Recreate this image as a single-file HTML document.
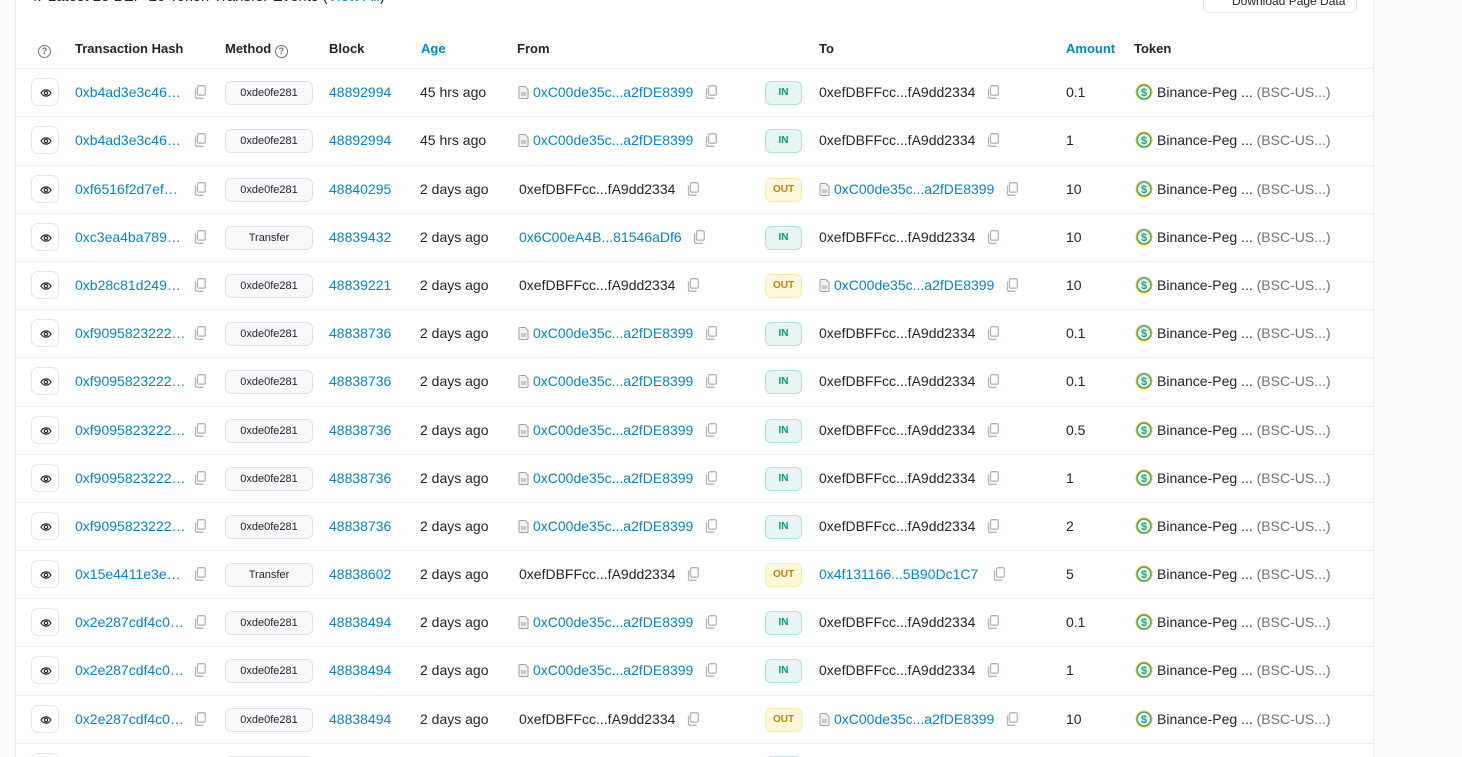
<!DOCTYPE html>
<html><head><meta charset="utf-8"><style>
*{margin:0;padding:0;box-sizing:border-box}
html{width:1462px;height:757px;overflow:hidden}
body{width:1462px;height:757px;overflow:hidden;background:#fbfbfc;font-family:"Liberation Sans",sans-serif;font-size:14px;color:#212529;position:relative}
.card{position:absolute;left:15px;top:-20px;width:1359px;height:777px;background:#fff;border:1px solid #e9ecef;border-bottom:none}
.abs{position:absolute;white-space:nowrap}
.top{left:31px;top:-13px;font-size:15px;color:#212529}
.top a{color:#0784c3}
.dl{left:1203px;top:-10px;width:154px;height:23px;border:1px solid #e3e6ea;border-radius:7px;background:#fff;font-size:12px;padding:3px 0 0 28px}
.hd{top:41px;font-size:13px;font-weight:bold;color:#212529}
.hd.b{color:#0784c3}
.q{display:inline-block;width:13px;height:13px;border:1.3px solid #6c757d;border-radius:50%;font-size:9px;line-height:10px;text-align:center;color:#6c757d;font-weight:bold;vertical-align:-1px}
.line{left:15px;width:1358px;height:1px;background:#eef0f2}
.row{position:absolute;left:0;width:1462px;height:48px}
.row>*{position:absolute;white-space:nowrap}
.eye{left:31px;top:10px;width:28px;height:28px;border:1px solid #e3e6ea;border-radius:7px}
.eye svg{position:absolute;left:8px;top:9px}
.hash{left:75px;top:16px;color:#0784c3}
.cp{width:12px;height:14px}
.m{left:225px;top:13px;width:88px;height:24px;border:1px solid #dee2e6;border-radius:6px;background:#f8f9fa;font-size:11px;text-align:center;line-height:22px}
.blk{left:329px;top:16px;color:#0784c3}
.age{left:420px;top:16px}
.fr{left:518px;top:16px}
.tt{left:819px;top:16px}
.lk{color:#0784c3}
.doc{display:inline-block;vertical-align:-2px;margin-right:4px}
.bd{left:765px;top:13px;width:37px;height:24px;border-radius:6px;font-size:10px;font-weight:bold;text-align:center;line-height:22px}
.in{background:#e7f6f3;border:1px solid #b3e2d8;color:#02977e}
.out{background:#fff7dd;border:1px solid #fde8a4;color:#b88700}
.amt{left:1066px;top:16px}
.tok{left:1135px;top:15px}
.tok .g{color:#6c757d}
.coin{display:inline-block;width:18px;height:18px;vertical-align:-4px;margin-right:4px}
</style></head><body>
<div class="card"></div>
<div class="abs top">⇅ Latest 25 BEP-20 Token Transfer Events (<a>View All</a>)</div>
<div class="abs dl">Download Page Data</div>
<div class="abs hd" style="left:38px"><span class="q">?</span></div>
<div class="abs hd" style="left:75px">Transaction Hash</div>
<div class="abs hd" style="left:225px">Method <span class="q">?</span></div>
<div class="abs hd" style="left:329px">Block</div>
<div class="abs hd b" style="left:421px">Age</div>
<div class="abs hd" style="left:517px">From</div>
<div class="abs hd" style="left:819px">To</div>
<div class="abs hd b" style="left:1066px">Amount</div>
<div class="abs hd" style="left:1134px">Token</div>
<div class="abs line" style="top:68px"></div>

<svg width="0" height="0" style="position:absolute">
<defs>
<symbol id="cp" viewBox="0 0 12 14"><rect x="3.5" y="0.7" width="7.8" height="9.5" rx="1.5" fill="none" stroke="#adb5bd" stroke-width="1.3"/><path d="M1.5 3.5v8.3a1.5 1.5 0 0 0 1.5 1.5h6.5" fill="none" stroke="#adb5bd" stroke-width="1.3"/></symbol>
<symbol id="doc" viewBox="0 0 11 13"><path d="M1 1.5a1 1 0 0 1 1-1h5l3 3v8a1 1 0 0 1-1 1H2a1 1 0 0 1-1-1z" fill="#f1f3f5" stroke="#9aa1a8" stroke-width="1"/><path d="M3 7h5M3 9h5" stroke="#9aa1a8" stroke-width="1"/></symbol>
<symbol id="eye" viewBox="0 0 14 12"><path d="M1 6c3-5 9-5 12 0c-3 5-9 5-12 0z" fill="none" stroke="#212529" stroke-width="1.4"/><circle cx="7" cy="6" r="2" fill="none" stroke="#212529" stroke-width="1.4"/></symbol>
<symbol id="coin" viewBox="0 0 18 18"><circle cx="9" cy="9" r="8.5" fill="#f0c52a"/><circle cx="9" cy="9" r="6.8" fill="#e8f7ef" stroke="#26a17b" stroke-width="1.2"/><text x="9" y="13" font-size="11" font-weight="bold" text-anchor="middle" fill="#26a17b" font-family="Liberation Sans">$</text></symbol>
</defs></svg>

<div class="row" style="top:68px"><div class="eye"><svg width="12" height="10"><use href="#eye"/></svg></div><span class="hash">0xb4ad3e3c46…</span><svg class="cp" style="left:194px;top:17px"><use href="#cp"/></svg><div class="m">0xde0fe281</div><span class="blk">48892994</span><span class="age">45 hrs ago</span><span class="fr"><svg class="doc" width="11" height="13"><use href="#doc"/></svg><span class="lk">0xC00de35c...a2fDE8399</span></span><svg class="cp" style="left:705px;top:17px"><use href="#cp"/></svg><div class="bd in">IN</div><span class="tt">0xefDBFFcc...fA9dd2334</span><svg class="cp" style="left:987px;top:17px"><use href="#cp"/></svg><span class="amt">0.1</span><span class="tok"><svg class="coin"><use href="#coin"/></svg>Binance-Peg ... <span class="g">(BSC-US...)</span></span></div>
<div class="abs line" style="top:116px"></div>
<div class="row" style="top:116px"><div class="eye"><svg width="12" height="10"><use href="#eye"/></svg></div><span class="hash">0xb4ad3e3c46…</span><svg class="cp" style="left:194px;top:17px"><use href="#cp"/></svg><div class="m">0xde0fe281</div><span class="blk">48892994</span><span class="age">45 hrs ago</span><span class="fr"><svg class="doc" width="11" height="13"><use href="#doc"/></svg><span class="lk">0xC00de35c...a2fDE8399</span></span><svg class="cp" style="left:705px;top:17px"><use href="#cp"/></svg><div class="bd in">IN</div><span class="tt">0xefDBFFcc...fA9dd2334</span><svg class="cp" style="left:987px;top:17px"><use href="#cp"/></svg><span class="amt">1</span><span class="tok"><svg class="coin"><use href="#coin"/></svg>Binance-Peg ... <span class="g">(BSC-US...)</span></span></div>
<div class="abs line" style="top:165px"></div>
<div class="row" style="top:165px"><div class="eye"><svg width="12" height="10"><use href="#eye"/></svg></div><span class="hash">0xf6516f2d7ef…</span><svg class="cp" style="left:194px;top:17px"><use href="#cp"/></svg><div class="m">0xde0fe281</div><span class="blk">48840295</span><span class="age">2 days ago</span><span class="fr" style="left:519px">0xefDBFFcc...fA9dd2334</span><svg class="cp" style="left:687px;top:17px"><use href="#cp"/></svg><div class="bd out">OUT</div><span class="tt"><svg class="doc" width="11" height="13"><use href="#doc"/></svg><span class="lk">0xC00de35c...a2fDE8399</span></span><svg class="cp" style="left:1006px;top:17px"><use href="#cp"/></svg><span class="amt">10</span><span class="tok"><svg class="coin"><use href="#coin"/></svg>Binance-Peg ... <span class="g">(BSC-US...)</span></span></div>
<div class="abs line" style="top:213px"></div>
<div class="row" style="top:213px"><div class="eye"><svg width="12" height="10"><use href="#eye"/></svg></div><span class="hash">0xc3ea4ba789…</span><svg class="cp" style="left:194px;top:17px"><use href="#cp"/></svg><div class="m">Transfer</div><span class="blk">48839432</span><span class="age">2 days ago</span><span class="fr lk" style="left:519px">0x6C00eA4B...81546aDf6</span><svg class="cp" style="left:693px;top:17px"><use href="#cp"/></svg><div class="bd in">IN</div><span class="tt">0xefDBFFcc...fA9dd2334</span><svg class="cp" style="left:987px;top:17px"><use href="#cp"/></svg><span class="amt">10</span><span class="tok"><svg class="coin"><use href="#coin"/></svg>Binance-Peg ... <span class="g">(BSC-US...)</span></span></div>
<div class="abs line" style="top:261px"></div>
<div class="row" style="top:261px"><div class="eye"><svg width="12" height="10"><use href="#eye"/></svg></div><span class="hash">0xb28c81d249…</span><svg class="cp" style="left:194px;top:17px"><use href="#cp"/></svg><div class="m">0xde0fe281</div><span class="blk">48839221</span><span class="age">2 days ago</span><span class="fr" style="left:519px">0xefDBFFcc...fA9dd2334</span><svg class="cp" style="left:687px;top:17px"><use href="#cp"/></svg><div class="bd out">OUT</div><span class="tt"><svg class="doc" width="11" height="13"><use href="#doc"/></svg><span class="lk">0xC00de35c...a2fDE8399</span></span><svg class="cp" style="left:1006px;top:17px"><use href="#cp"/></svg><span class="amt">10</span><span class="tok"><svg class="coin"><use href="#coin"/></svg>Binance-Peg ... <span class="g">(BSC-US...)</span></span></div>
<div class="abs line" style="top:309px"></div>
<div class="row" style="top:309px"><div class="eye"><svg width="12" height="10"><use href="#eye"/></svg></div><span class="hash">0xf9095823222…</span><svg class="cp" style="left:194px;top:17px"><use href="#cp"/></svg><div class="m">0xde0fe281</div><span class="blk">48838736</span><span class="age">2 days ago</span><span class="fr"><svg class="doc" width="11" height="13"><use href="#doc"/></svg><span class="lk">0xC00de35c...a2fDE8399</span></span><svg class="cp" style="left:705px;top:17px"><use href="#cp"/></svg><div class="bd in">IN</div><span class="tt">0xefDBFFcc...fA9dd2334</span><svg class="cp" style="left:987px;top:17px"><use href="#cp"/></svg><span class="amt">0.1</span><span class="tok"><svg class="coin"><use href="#coin"/></svg>Binance-Peg ... <span class="g">(BSC-US...)</span></span></div>
<div class="abs line" style="top:357px"></div>
<div class="row" style="top:357px"><div class="eye"><svg width="12" height="10"><use href="#eye"/></svg></div><span class="hash">0xf9095823222…</span><svg class="cp" style="left:194px;top:17px"><use href="#cp"/></svg><div class="m">0xde0fe281</div><span class="blk">48838736</span><span class="age">2 days ago</span><span class="fr"><svg class="doc" width="11" height="13"><use href="#doc"/></svg><span class="lk">0xC00de35c...a2fDE8399</span></span><svg class="cp" style="left:705px;top:17px"><use href="#cp"/></svg><div class="bd in">IN</div><span class="tt">0xefDBFFcc...fA9dd2334</span><svg class="cp" style="left:987px;top:17px"><use href="#cp"/></svg><span class="amt">0.1</span><span class="tok"><svg class="coin"><use href="#coin"/></svg>Binance-Peg ... <span class="g">(BSC-US...)</span></span></div>
<div class="abs line" style="top:406px"></div>
<div class="row" style="top:406px"><div class="eye"><svg width="12" height="10"><use href="#eye"/></svg></div><span class="hash">0xf9095823222…</span><svg class="cp" style="left:194px;top:17px"><use href="#cp"/></svg><div class="m">0xde0fe281</div><span class="blk">48838736</span><span class="age">2 days ago</span><span class="fr"><svg class="doc" width="11" height="13"><use href="#doc"/></svg><span class="lk">0xC00de35c...a2fDE8399</span></span><svg class="cp" style="left:705px;top:17px"><use href="#cp"/></svg><div class="bd in">IN</div><span class="tt">0xefDBFFcc...fA9dd2334</span><svg class="cp" style="left:987px;top:17px"><use href="#cp"/></svg><span class="amt">0.5</span><span class="tok"><svg class="coin"><use href="#coin"/></svg>Binance-Peg ... <span class="g">(BSC-US...)</span></span></div>
<div class="abs line" style="top:454px"></div>
<div class="row" style="top:454px"><div class="eye"><svg width="12" height="10"><use href="#eye"/></svg></div><span class="hash">0xf9095823222…</span><svg class="cp" style="left:194px;top:17px"><use href="#cp"/></svg><div class="m">0xde0fe281</div><span class="blk">48838736</span><span class="age">2 days ago</span><span class="fr"><svg class="doc" width="11" height="13"><use href="#doc"/></svg><span class="lk">0xC00de35c...a2fDE8399</span></span><svg class="cp" style="left:705px;top:17px"><use href="#cp"/></svg><div class="bd in">IN</div><span class="tt">0xefDBFFcc...fA9dd2334</span><svg class="cp" style="left:987px;top:17px"><use href="#cp"/></svg><span class="amt">1</span><span class="tok"><svg class="coin"><use href="#coin"/></svg>Binance-Peg ... <span class="g">(BSC-US...)</span></span></div>
<div class="abs line" style="top:502px"></div>
<div class="row" style="top:502px"><div class="eye"><svg width="12" height="10"><use href="#eye"/></svg></div><span class="hash">0xf9095823222…</span><svg class="cp" style="left:194px;top:17px"><use href="#cp"/></svg><div class="m">0xde0fe281</div><span class="blk">48838736</span><span class="age">2 days ago</span><span class="fr"><svg class="doc" width="11" height="13"><use href="#doc"/></svg><span class="lk">0xC00de35c...a2fDE8399</span></span><svg class="cp" style="left:705px;top:17px"><use href="#cp"/></svg><div class="bd in">IN</div><span class="tt">0xefDBFFcc...fA9dd2334</span><svg class="cp" style="left:987px;top:17px"><use href="#cp"/></svg><span class="amt">2</span><span class="tok"><svg class="coin"><use href="#coin"/></svg>Binance-Peg ... <span class="g">(BSC-US...)</span></span></div>
<div class="abs line" style="top:550px"></div>
<div class="row" style="top:550px"><div class="eye"><svg width="12" height="10"><use href="#eye"/></svg></div><span class="hash">0x15e4411e3e…</span><svg class="cp" style="left:194px;top:17px"><use href="#cp"/></svg><div class="m">Transfer</div><span class="blk">48838602</span><span class="age">2 days ago</span><span class="fr" style="left:519px">0xefDBFFcc...fA9dd2334</span><svg class="cp" style="left:687px;top:17px"><use href="#cp"/></svg><div class="bd out">OUT</div><span class="tt lk">0x4f131166...5B90Dc1C7</span><svg class="cp" style="left:993px;top:17px"><use href="#cp"/></svg><span class="amt">5</span><span class="tok"><svg class="coin"><use href="#coin"/></svg>Binance-Peg ... <span class="g">(BSC-US...)</span></span></div>
<div class="abs line" style="top:598px"></div>
<div class="row" style="top:598px"><div class="eye"><svg width="12" height="10"><use href="#eye"/></svg></div><span class="hash">0x2e287cdf4c0…</span><svg class="cp" style="left:194px;top:17px"><use href="#cp"/></svg><div class="m">0xde0fe281</div><span class="blk">48838494</span><span class="age">2 days ago</span><span class="fr"><svg class="doc" width="11" height="13"><use href="#doc"/></svg><span class="lk">0xC00de35c...a2fDE8399</span></span><svg class="cp" style="left:705px;top:17px"><use href="#cp"/></svg><div class="bd in">IN</div><span class="tt">0xefDBFFcc...fA9dd2334</span><svg class="cp" style="left:987px;top:17px"><use href="#cp"/></svg><span class="amt">0.1</span><span class="tok"><svg class="coin"><use href="#coin"/></svg>Binance-Peg ... <span class="g">(BSC-US...)</span></span></div>
<div class="abs line" style="top:646px"></div>
<div class="row" style="top:646px"><div class="eye"><svg width="12" height="10"><use href="#eye"/></svg></div><span class="hash">0x2e287cdf4c0…</span><svg class="cp" style="left:194px;top:17px"><use href="#cp"/></svg><div class="m">0xde0fe281</div><span class="blk">48838494</span><span class="age">2 days ago</span><span class="fr"><svg class="doc" width="11" height="13"><use href="#doc"/></svg><span class="lk">0xC00de35c...a2fDE8399</span></span><svg class="cp" style="left:705px;top:17px"><use href="#cp"/></svg><div class="bd in">IN</div><span class="tt">0xefDBFFcc...fA9dd2334</span><svg class="cp" style="left:987px;top:17px"><use href="#cp"/></svg><span class="amt">1</span><span class="tok"><svg class="coin"><use href="#coin"/></svg>Binance-Peg ... <span class="g">(BSC-US...)</span></span></div>
<div class="abs line" style="top:695px"></div>
<div class="row" style="top:695px"><div class="eye"><svg width="12" height="10"><use href="#eye"/></svg></div><span class="hash">0x2e287cdf4c0…</span><svg class="cp" style="left:194px;top:17px"><use href="#cp"/></svg><div class="m">0xde0fe281</div><span class="blk">48838494</span><span class="age">2 days ago</span><span class="fr" style="left:519px">0xefDBFFcc...fA9dd2334</span><svg class="cp" style="left:687px;top:17px"><use href="#cp"/></svg><div class="bd out">OUT</div><span class="tt"><svg class="doc" width="11" height="13"><use href="#doc"/></svg><span class="lk">0xC00de35c...a2fDE8399</span></span><svg class="cp" style="left:1006px;top:17px"><use href="#cp"/></svg><span class="amt">10</span><span class="tok"><svg class="coin"><use href="#coin"/></svg>Binance-Peg ... <span class="g">(BSC-US...)</span></span></div>
<div class="abs line" style="top:743px"></div>
<div class="row" style="top:743px;height:14px;overflow:hidden"><div class="eye"></div><div class="m"></div><div class="bd in"></div></div>
</body></html>
